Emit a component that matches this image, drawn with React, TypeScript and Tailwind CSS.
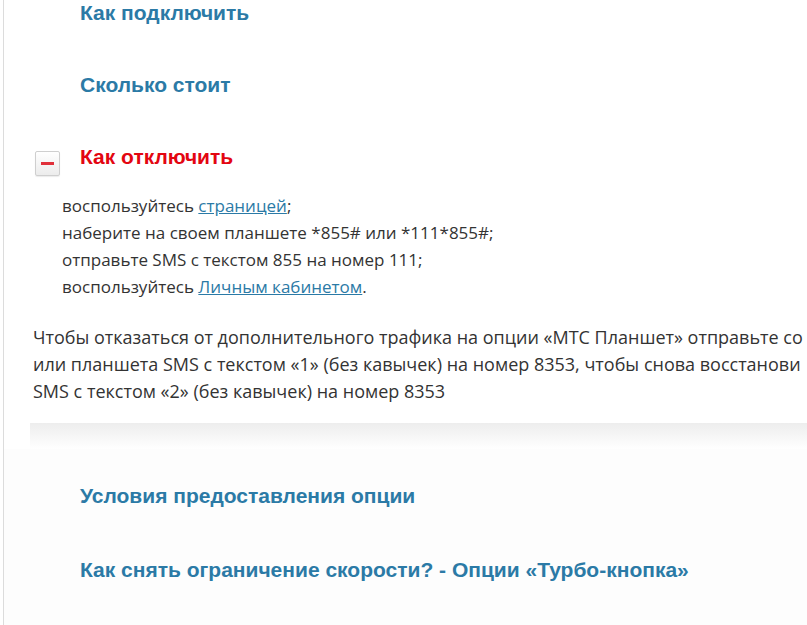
import React from "react";

const H = "font-['Liberation_Sans',Arial,sans-serif] font-bold text-[21px] leading-[26px] text-[#2b7aa6]";
const B = "font-['Open_Sans',sans-serif] text-[#333333]";

function Minus() {
  return (
    <div className="w-[25px] h-[25px] rounded-[2px] border border-[#cfcfcf] bg-gradient-to-b from-[#ffffff] to-[#ececec] flex items-center justify-center shadow-[0_1px_1px_rgba(0,0,0,0.08)]">
      <div className="w-[13px] h-[3px] bg-[#e0303a]" />
    </div>
  );
}

export default function App() {
  return (
    <div className="w-[807px] h-[625px] bg-white overflow-hidden">
      <div className="ml-[3px] h-full border-l border-[#dcdcdc] flex flex-col">
        <div className="h-[72px] pl-[76px]">
          <div className={H}>Как подключить</div>
        </div>
        <div className="h-[72px] pl-[76px]">
          <div className={H}>Сколько стоит</div>
        </div>
        <div className="relative">
          <div className="flex items-start">
            <div className="pl-[31px] pt-[7px] w-[76px]">
              <Minus />
            </div>
            <div className={H + " text-[#e30611]"}>Как отключить</div>
          </div>
          <div className={B + " text-[17px] pl-[58px] pt-[16px] leading-[27px]"}>
            <div>
              воспользуйтесь <span className="text-[#2b7aa6] underline">страницей</span>;
            </div>
            <div>наберите на своем планшете *855# или *111*855#;</div>
            <div>отправьте SMS с текстом 855 на номер 111;</div>
            <div>
              воспользуйтесь <span className="text-[#2b7aa6] underline">Личным кабинетом</span>.
            </div>
          </div>
          <div className={B + " text-[18px] pl-[29px] pt-[24px] leading-[27px] whitespace-nowrap overflow-hidden"}>
            <div>Чтобы отказаться от дополнительного трафика на опции «МТС Планшет» отправьте со</div>
            <div>или планшета SMS с текстом «1» (без кавычек) на номер 8353, чтобы снова восстанови</div>
            <div>SMS с текстом «2» (без кавычек) на номер 8353</div>
          </div>
          <div className="h-[18px]" />
          <div className="ml-[26px] h-[26px] bg-gradient-to-b from-[#ededed] to-[#ffffff]" />
        </div>
        <div className="flex-1 bg-[#fdfdfd] pl-[76px] pt-[34px]">
          <div className="h-[74px]">
            <div className={H}>Условия предоставления опции</div>
          </div>
          <div className={H}>Как снять ограничение скорости? - Опции «Турбо-кнопка»</div>
        </div>
      </div>
    </div>
  );
}
